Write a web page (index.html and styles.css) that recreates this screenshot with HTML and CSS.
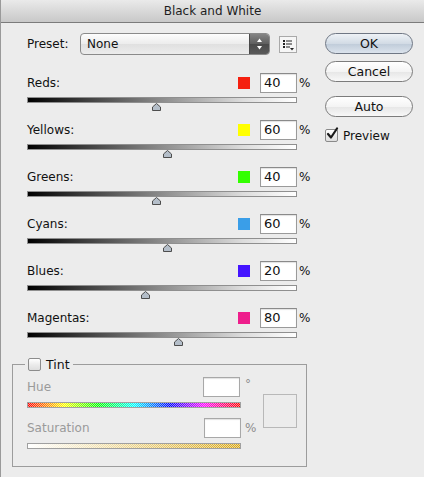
FILE: index.html
```html
<!DOCTYPE html>
<html>
<head>
<meta charset="utf-8">
<link rel="stylesheet" href="styles.css">
</head>
<body>
<div class="window">
  <div class="titlebar">Black and White</div>
  <div class="content">
    <div class="left">
      <div class="preset-row">
        <span class="preset-label">Preset:</span>
        <div class="select">
          <span class="select-value">None</span>
          <span class="stepper">
            <svg width="19" height="20" viewBox="0 0 19 20"><path d="M9.5 4.5 L12 8 L7 8 Z" fill="#fff"/><path d="M9.5 15.5 L12 12 L7 12 Z" fill="#fff"/></svg>
          </span>
        </div>
        <span class="menu-btn">
          <svg width="16" height="15" viewBox="0 0 16 15">
            <rect x="3" y="3" width="2" height="2" fill="#222"/>
            <rect x="6" y="3.5" width="6" height="1" fill="#222"/>
            <rect x="3" y="6" width="2" height="2" fill="#222"/>
            <rect x="6" y="6.5" width="6" height="1" fill="#222"/>
            <rect x="3" y="9" width="2" height="2" fill="#222"/>
            <rect x="6" y="9.5" width="4" height="1" fill="#222"/>
            <path d="M10 11 L14 11 L12 13.5 Z" fill="#222"/>
          </svg>
        </span>
      </div>
      <div class="channels">
        <div class="channel">
          <div class="ch-head"><span class="ch-label">Reds:</span><span class="swatch red"></span><span class="num">40</span><span class="pct">%</span></div>
          <div class="track"></div>
          <div class="thumb-zone"><svg class="thumb" style="left:125px" width="9" height="8" viewBox="0 0 9 8"><path d="M4.5 0.5 L8.5 4 L8.5 7.5 L0.5 7.5 L0.5 4 Z" fill="#b4bec9" stroke="#4d4d4d"/></svg></div>
        </div>
        <div class="channel">
          <div class="ch-head"><span class="ch-label">Yellows:</span><span class="swatch yellow"></span><span class="num">60</span><span class="pct">%</span></div>
          <div class="track"></div>
          <div class="thumb-zone"><svg class="thumb" style="left:136px" width="9" height="8" viewBox="0 0 9 8"><path d="M4.5 0.5 L8.5 4 L8.5 7.5 L0.5 7.5 L0.5 4 Z" fill="#b4bec9" stroke="#4d4d4d"/></svg></div>
        </div>
        <div class="channel">
          <div class="ch-head"><span class="ch-label">Greens:</span><span class="swatch green"></span><span class="num">40</span><span class="pct">%</span></div>
          <div class="track"></div>
          <div class="thumb-zone"><svg class="thumb" style="left:125px" width="9" height="8" viewBox="0 0 9 8"><path d="M4.5 0.5 L8.5 4 L8.5 7.5 L0.5 7.5 L0.5 4 Z" fill="#b4bec9" stroke="#4d4d4d"/></svg></div>
        </div>
        <div class="channel">
          <div class="ch-head"><span class="ch-label">Cyans:</span><span class="swatch cyan"></span><span class="num">60</span><span class="pct">%</span></div>
          <div class="track"></div>
          <div class="thumb-zone"><svg class="thumb" style="left:136px" width="9" height="8" viewBox="0 0 9 8"><path d="M4.5 0.5 L8.5 4 L8.5 7.5 L0.5 7.5 L0.5 4 Z" fill="#b4bec9" stroke="#4d4d4d"/></svg></div>
        </div>
        <div class="channel">
          <div class="ch-head"><span class="ch-label">Blues:</span><span class="swatch blue"></span><span class="num">20</span><span class="pct">%</span></div>
          <div class="track"></div>
          <div class="thumb-zone"><svg class="thumb" style="left:114px" width="9" height="8" viewBox="0 0 9 8"><path d="M4.5 0.5 L8.5 4 L8.5 7.5 L0.5 7.5 L0.5 4 Z" fill="#b4bec9" stroke="#4d4d4d"/></svg></div>
        </div>
        <div class="channel">
          <div class="ch-head"><span class="ch-label">Magentas:</span><span class="swatch magenta"></span><span class="num">80</span><span class="pct">%</span></div>
          <div class="track"></div>
          <div class="thumb-zone"><svg class="thumb" style="left:147px" width="9" height="8" viewBox="0 0 9 8"><path d="M4.5 0.5 L8.5 4 L8.5 7.5 L0.5 7.5 L0.5 4 Z" fill="#b4bec9" stroke="#4d4d4d"/></svg></div>
        </div>
      </div>
    </div>
    <div class="right">
      <div class="btn default">OK</div>
      <div class="btn cancel">Cancel</div>
      <div class="btn auto">Auto</div>
      <div class="check-row">
        <span class="checkbox checked"><svg width="15" height="15" viewBox="0 0 15 15"><path d="M3 7 L6 10.5 L12 1.5" fill="none" stroke="#1a1a1a" stroke-width="2.2" stroke-linecap="round" stroke-linejoin="round"/></svg></span>
        <span class="check-label">Preview</span>
      </div>
    </div>
  </div>
  <div class="tint">
    <div class="legend"><span class="checkbox"></span><span class="legend-label">Tint</span></div>
    <div class="tint-body">
      <div class="tint-controls">
        <div class="t-head"><span class="t-label">Hue</span><span class="num dim"></span><span class="unit deg">°</span></div>
        <div class="bar hue"></div>
        <div class="t-head sat-head"><span class="t-label">Saturation</span><span class="num dim"></span><span class="unit">%</span></div>
        <div class="bar sat"></div>
      </div>
      <div class="tint-swatch"></div>
    </div>
  </div>
</div>
</body>
</html>
```

FILE: styles.css
```css
html, body {
  margin: 0;
  padding: 0;
  background: #ececec;
}
body {
  font-family: "DejaVu Sans", "Liberation Sans", sans-serif;
  font-size: 12px;
  color: #111;
}
.window {
  width: 424px;
  height: 477px;
  box-sizing: border-box;
  border-left: 1px solid #9a9a9a;
  background: #ececec;
  overflow: hidden;
}
.titlebar {
  height: 22px;
  line-height: 22px;
  text-align: center;
  color: #1e1e1e;
  background: linear-gradient(#eaeaea, #d9d9d9 50%, #c8c8c8);
  border-bottom: 1px solid #7b7b7b;
  font-size: 12px;
  box-sizing: content-box;
}
.content {
  display: flex;
  align-items: flex-start;
  padding: 10px 0 0 26px;
}
.left {
  width: 283px;
}
.right {
  width: 88px;
  margin-left: 15px;
  display: flex;
  flex-direction: column;
}
.preset-row {
  display: flex;
  align-items: center;
  height: 22px;
}
.preset-label {
  width: 53px;
}
.select {
  width: 190px;
  height: 22px;
  box-sizing: border-box;
  border: 1px solid #8a8a8a;
  border-radius: 4px;
  background: linear-gradient(#fdfdfd, #ececec 50%, #e0e0e0 51%, #ececec);
  display: flex;
  align-items: stretch;
  overflow: hidden;
}
.select-value {
  flex: 1;
  padding-left: 6px;
  line-height: 20px;
}
.stepper {
  width: 19px;
  background: linear-gradient(#858585, #5e5e5e 50%, #4a4a4a 51%, #5a5a5a);
  border-left: 1px solid #4a4a4a;
  display: flex;
}
.menu-btn {
  margin-left: 9px;
  width: 18px;
  height: 17px;
  box-sizing: border-box;
  border: 1px solid #a9a9a9;
  background: #f6f6f6;
  display: flex;
}
.channels {
  margin-top: 18px;
}
.channel {
  height: 47px;
}
.ch-head {
  display: flex;
  align-items: center;
  height: 20px;
}
.ch-label {
  flex: 1;
}
.swatch {
  width: 12px;
  height: 12px;
  margin-right: 10px;
}
.red { background: #f5200f; }
.yellow { background: #ffff00; }
.green { background: #33ff00; }
.cyan { background: #3a9ee8; }
.blue { background: #4414ff; }
.magenta { background: #ee1e8c; }
.num {
  width: 37px;
  height: 20px;
  box-sizing: border-box;
  border: 1px solid #9a9a9a;
  border-top-color: #8a8a8a;
  background: #fff;
  box-shadow: inset 0 1px 1px rgba(0,0,0,0.12);
  font-size: 13px;
  line-height: 18px;
  padding-left: 3px;
  color: #111;
}
.pct {
  width: 11px;
  margin-left: 2px;
  font-size: 12px;
}
.track {
  margin-top: 4px;
  width: 270px;
  height: 6px;
  box-sizing: border-box;
  border: 1px solid #8f8f8f;
  background: linear-gradient(to right, #000, #3a3a3a 20%, #8c8c8c 50%, #dcdcdc 80%, #fff);
}
.thumb-zone {
  position: relative;
  width: 270px;
  height: 8px;
}
.thumb {
  position: absolute;
  top: 0;
  display: block;
}
.btn {
  height: 21px;
  box-sizing: border-box;
  border: 1px solid #7c7c7c;
  border-radius: 11px;
  text-align: center;
  line-height: 19px;
  font-size: 12.5px;
  color: #111;
  background: linear-gradient(#ffffff, #f4f4f4 50%, #e6e6e6 51%, #f8f8f8);
}
.btn.default {
  border-color: #6f7784;
  background: linear-gradient(#eef2f6, #d2dbe5 50%, #bfcbd9 51%, #dbe3ec);
}
.btn.cancel {
  margin-top: 7px;
}
.btn.auto {
  margin-top: 14px;
}
.check-row {
  margin-top: 12px;
  display: flex;
  align-items: center;
  height: 13px;
}
.checkbox {
  position: relative;
  width: 13px;
  height: 13px;
  box-sizing: border-box;
  border: 1px solid #8a8a8a;
  border-radius: 2px;
  background: linear-gradient(#ffffff, #ececec 50%, #dedede);
  display: inline-block;
  flex: none;
}
.checkbox svg {
  position: absolute;
  left: -1px;
  top: -3px;
}
.check-label {
  margin-left: 5px;
}
.tint {
  margin: 9px 0 0 11px;
  width: 295px;
  height: 103px;
  box-sizing: border-box;
  border: 1px solid #9c9c9c;
  padding-left: 14px;
}
.legend {
  margin-top: -7px;
  margin-left: -2px;
  padding: 0 3px;
  background: #ececec;
  display: flex;
  align-items: center;
  width: max-content;
  height: 13px;
}
.legend .checkbox {
  border-color: #8c8c8c;
}
.legend-label {
  margin-left: 5px;
  font-size: 12.5px;
  color: #111;
}
.tint-body {
  display: flex;
  align-items: flex-start;
}
.tint-controls {
  width: 214px;
}
.t-head {
  margin-top: 6px;
  display: flex;
  align-items: center;
  height: 20px;
}
.t-head.sat-head {
  margin-top: 10px;
}
.t-label {
  flex: 1;
  color: #9a9a9a;
}
.num.dim {
  border-color: #a8a8a8;
}
.unit {
  width: 12px;
  margin-left: 4px;
  margin-right: -16px;
  color: #8e8e8e;
}
.unit.deg {
  align-self: flex-start;
  margin-left: 5px;
  line-height: 14px;
}
.bar {
  margin-top: 5px;
  width: 214px;
  height: 6px;
  box-sizing: border-box;
  border: 1px solid #a0a0a0;
}
.bar.hue {
  background:
    repeating-conic-gradient(rgba(255,255,255,0.55) 0 25%, transparent 0 50%) 0 0 / 2px 2px,
    linear-gradient(to right, #ff0000, #ffff00 17%, #00ff00 33%, #00ffff 50%, #0000ff 67%, #ff00ff 83%, #ff0000);
}
.bar.sat {
  background:
    repeating-conic-gradient(rgba(255,255,255,0.55) 0 25%, transparent 0 50%) 0 0 / 2px 2px,
    linear-gradient(to right, #ffffff, #d8a818);
}
.tint-swatch {
  margin-left: 22px;
  margin-top: 23px;
  width: 34px;
  height: 34px;
  box-sizing: border-box;
  border: 1px solid #b8b8b8;
}
```
